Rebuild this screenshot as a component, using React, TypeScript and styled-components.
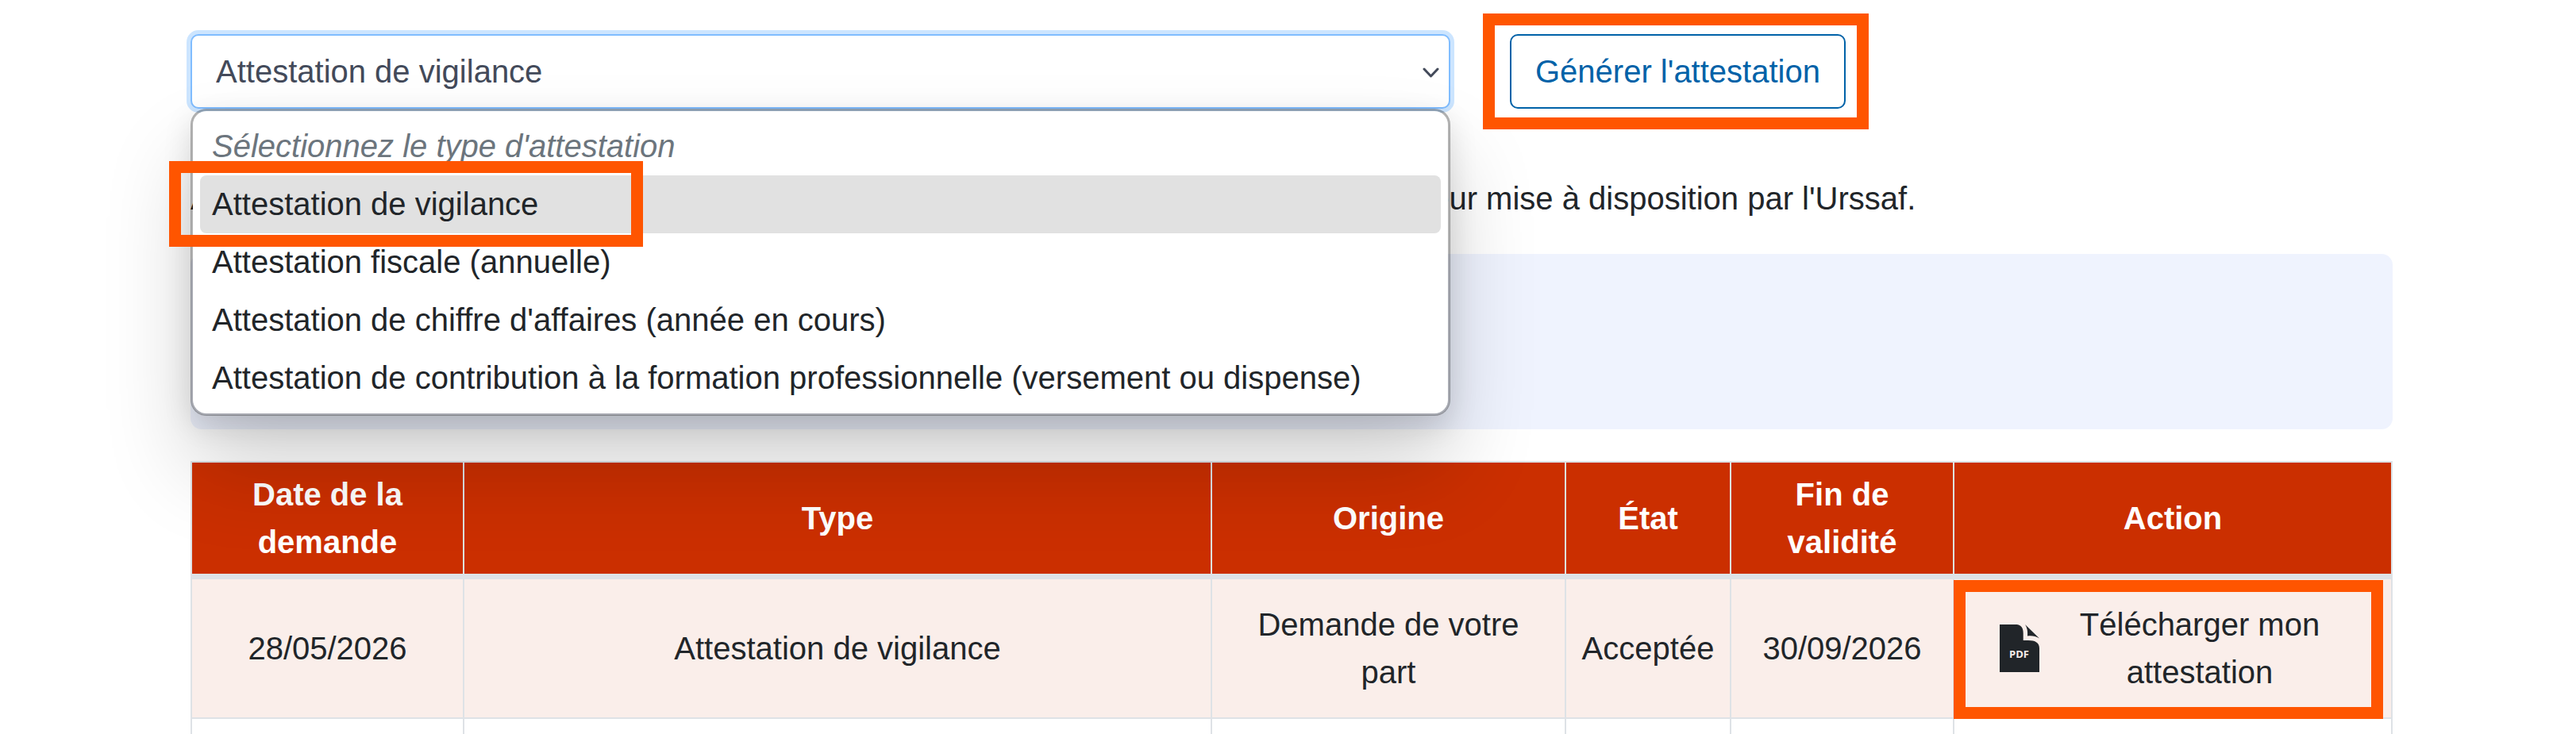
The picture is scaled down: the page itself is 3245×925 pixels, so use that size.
import React from "react";
import styled, { createGlobalStyle } from "styled-components";

const GlobalStyle = createGlobalStyle`
  *, *::before, *::after { box-sizing: border-box; }
  body {
    margin: 0;
    background: #fff;
    color: #212529;
    font-family: "Liberation Sans", Arial, sans-serif;
    font-size: 40px;
    line-height: 60px;
  }
`;

const Page = styled.main`
  padding: 43px 231px 0 240px;
`;

const RequestForm = styled.form`
  display: flex;
  align-items: flex-start;
  gap: 75px;
`;

const Field = styled.div`
  position: relative;
  flex: 1 1 auto;
  max-width: 1587px;
`;

const TypeSelect = styled.select`
  display: block;
  width: 100%;
  height: 94px;
  margin: 0;
  padding: 0 30px;
  appearance: none;
  border: 2px solid #80bdff;
  border-radius: 10px;
  outline: none;
  box-shadow: 0 0 0 5px #cce5ff;
  background: #fff;
  color: #434a5a;
  font: inherit;
`;

const Chevron = styled.svg`
  position: absolute;
  top: 42px;
  right: 14px;
  pointer-events: none;
`;

const Menu = styled.ul`
  position: absolute;
  z-index: 2;
  top: 100%;
  left: 0;
  right: 0;
  margin: 0;
  padding: 8px 9px;
  list-style: none;
  border: 3px solid rgba(0, 0, 0, 0.3);
  border-radius: 20px;
  background: #fff;
  background-clip: padding-box;
  box-shadow: 0 64px 110px rgba(0, 0, 0, 0.18), 0 12px 36px rgba(0, 0, 0, 0.12);
`;

const Option = styled.li<{ $active?: boolean; $placeholder?: boolean }>`
  position: relative;
  height: 73px;
  padding: 0 15px;
  border-radius: 8px;
  line-height: 73px;
  white-space: nowrap;
  background: ${(p) => (p.$active ? "#e1e1e1" : "transparent")};
  color: ${(p) => (p.$placeholder ? "#6c757d" : "#212529")};
  font-style: ${(p) => (p.$placeholder ? "italic" : "normal")};
`;

const Highlight = styled.span<{ $inset: string; $width?: string }>`
  position: absolute;
  z-index: 3;
  inset: ${(p) => p.$inset};
  width: ${(p) => p.$width ?? "auto"};
  border: 15px solid #ff5500;
  pointer-events: none;
`;

const ButtonWrap = styled.div`
  position: relative;
`;

const GenerateButton = styled.button`
  display: block;
  height: 94px;
  padding: 0 30px;
  border: 2px solid #0062a8;
  border-radius: 10px;
  background: #fff;
  color: #0062a8;
  font: inherit;
  white-space: nowrap;
`;

const Notice = styled.p`
  margin: 83px 0 40px;
`;

const InfoPanel = styled.aside`
  min-height: 221px;
  margin-bottom: 40px;
  border-radius: 14px;
  background: #eff3fe;
`;

const Table = styled.table`
  width: 100%;
  table-layout: fixed;
  border-collapse: separate;
  border-spacing: 0;
  border-top: 2px solid #dee2e6;
  border-left: 2px solid #dee2e6;
  text-align: center;
`;

const Col = styled.col<{ $width?: number }>`
  width: ${(p) => (p.$width ? `${p.$width}px` : "auto")};
`;

const HeadCell = styled.th`
  padding: 10px;
  border-right: 2px solid #dee2e6;
  border-bottom: 7px solid #dee2e6;
  background: #cb2f00;
  color: #fff;
  font-weight: 700;
`;

const Cell = styled.td<{ $roomy?: boolean }>`
  position: relative;
  padding: 27px ${(p) => (p.$roomy ? "30px" : "10px")};
  border-right: 2px solid #dee2e6;
  border-bottom: 2px solid #dee2e6;
  background: #faeeea;
`;

const NextCell = styled.td`
  height: 19px;
  padding: 0;
  border-right: 2px solid #dee2e6;
`;

const DownloadLink = styled.a`
  display: flex;
  align-items: center;
  gap: 18px;
  padding: 0 47px;
  color: inherit;
  text-decoration: none;
`;

const DownloadLabel = styled.span`
  flex: 1;
`;

const PdfIcon = () => (
  <svg width="50" height="60" viewBox="0 0 50 60" aria-hidden="true">
    <path d="M0 0H20C27 0 29.7 4 29.7 11V20H36C45 20 50 23 50 30V60H0Z" fill="#212529" />
    <path d="M32 0L50 17.5C45 14.5 41 14 35 14.5C35.5 8 34.5 4 32 0Z" fill="#212529" />
    <text x="12" y="42" fill="#faeeea" fontFamily="'Open Sans', sans-serif" fontSize="13" fontWeight="700">
      PDF
    </text>
  </svg>
);

const types = [
  "Attestation de vigilance",
  "Attestation fiscale (annuelle)",
  "Attestation de chiffre d'affaires (année en cours)",
  "Attestation de contribution à la formation professionnelle (versement ou dispense)",
];

const columns: { label: string; width?: number }[] = [
  { label: "Date de la demande", width: 343 },
  { label: "Type" },
  { label: "Origine", width: 446 },
  { label: "État", width: 208 },
  { label: "Fin de validité", width: 281 },
  { label: "Action", width: 552 },
];

export default function App() {
  return (
    <>
      <GlobalStyle />
      <Page>
        <RequestForm onSubmit={(e) => e.preventDefault()}>
          <Field>
            <TypeSelect aria-label="Type d'attestation" defaultValue={types[0]}>
              {types.map((t) => (
                <option key={t}>{t}</option>
              ))}
            </TypeSelect>
            <Chevron width="21" height="13" viewBox="0 0 21 13" aria-hidden="true">
              <path
                d="M2 2L10.5 11L19 2"
                fill="none"
                stroke="#434a5a"
                strokeWidth="3"
                strokeLinecap="round"
                strokeLinejoin="round"
              />
            </Chevron>
            <Menu role="listbox" aria-label="Types d'attestation">
              <Option role="option" aria-disabled="true" $placeholder>
                Sélectionnez le type d'attestation
              </Option>
              {types.map((t, i) => (
                <Option key={t} role="option" aria-selected={i === 0} $active={i === 0}>
                  {t}
                  {i === 0 && <Highlight $inset="-18px auto -17px -39px" $width="597px" />}
                </Option>
              ))}
            </Menu>
          </Field>
          <ButtonWrap>
            <GenerateButton type="submit">Générer l'attestation</GenerateButton>
            <Highlight $inset="-26px -29px -26px -34px" />
          </ButtonWrap>
        </RequestForm>

        <Notice>
          Attestations disponibles au téléchargement pendant une période de six mois à partir de leur mise à
          disposition par l'Urssaf.
        </Notice>
        <InfoPanel />

        <Table>
          <colgroup>
            {columns.map((c) => (
              <Col key={c.label} $width={c.width} />
            ))}
          </colgroup>
          <thead>
            <tr>
              {columns.map((c) => (
                <HeadCell key={c.label} scope="col">
                  {c.label}
                </HeadCell>
              ))}
            </tr>
          </thead>
          <tbody>
            <tr>
              <Cell>28/05/2026</Cell>
              <Cell>Attestation de vigilance</Cell>
              <Cell $roomy>Demande de votre part</Cell>
              <Cell>Acceptée</Cell>
              <Cell>30/09/2026</Cell>
              <Cell>
                <DownloadLink href="#attestation">
                  <PdfIcon />
                  <DownloadLabel>Télécharger mon attestation</DownloadLabel>
                </DownloadLink>
                <Highlight $inset="1px 10px -2px -1px" />
              </Cell>
            </tr>
            <tr>
              {columns.map((c) => (
                <NextCell key={c.label} />
              ))}
            </tr>
          </tbody>
        </Table>
      </Page>
    </>
  );
}
